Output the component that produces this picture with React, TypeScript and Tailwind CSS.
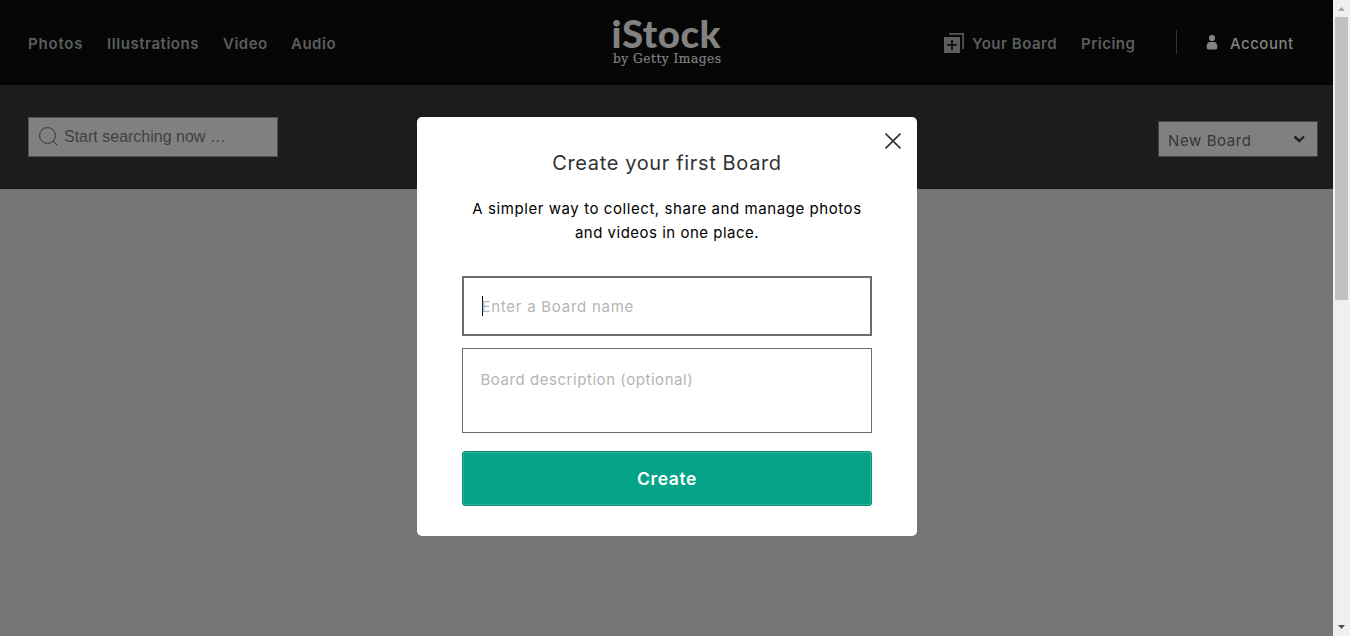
import React from 'react';

function Logo() {
  return (
    <svg className="relative left-1.5 h-[64px] w-[116px] shrink-0" viewBox="0 0 116 64" fill="#828282" aria-label="iStock by Getty Images">
      <text x="2.5" y="37.5" fontFamily="Lato, sans-serif" fontWeight="900" fontSize="37.5" textLength="109.5" lengthAdjust="spacingAndGlyphs">iStock</text>
      <text x="4" y="53" fontFamily="'DejaVu Serif', serif" fontWeight="400" fontSize="12.8" stroke="#828282" strokeWidth="0.2" textLength="108.5" lengthAdjust="spacingAndGlyphs">by Getty Images</text>
    </svg>
  );
}

function BoardIcon() {
  return (
    <svg className="relative -top-px h-5 w-5" viewBox="0 0 20 20">
      <path d="M5 .9H19.1V16" fill="none" stroke="#565958" strokeWidth="1.7" />
      <path d="M0 4H16V20H0z" fill="#5b5e5d" />
      <path d="M8 7V17M3 12H13" stroke="#060606" strokeWidth="1.6" />
    </svg>
  );
}

function Header() {
  return (
    <header className="flex h-[85px] items-center bg-[#060606] pb-px pl-7 pr-10 text-[15px] font-semibold leading-6 tracking-[0.5px] text-[#5b5e5d]">
      <nav className="flex flex-1 gap-6 pt-1">
        <a className="w-[55px] whitespace-nowrap tracking-[0.8px]">Photos</a>
        <a className="w-[92px] whitespace-nowrap tracking-[0.55px]">Illustrations</a>
        <a className="w-11 whitespace-nowrap">Video</a>
        <a className="whitespace-nowrap">Audio</a>
      </nav>
      <Logo />
      <div className="flex flex-1 items-center justify-end pt-1">
        <BoardIcon />
        <a className="ml-2 w-[85px] whitespace-nowrap">Your Board</a>
        <a className="ml-6 w-[55px] whitespace-nowrap">Pricing</a>
        <span className="-mt-1 ml-10 h-6 w-px bg-[#333]" />
        <svg className="-mt-1 ml-[29px] h-[15px] w-3" viewBox="0 0 12 15" fill="#828282">
          <circle cx="6" cy="3.1" r="3.1" />
          <path d="M3.5 7H8.5Q11.3 7.5 11.3 11.5V13.4L10 14.5H2L.7 13.4V11.5Q.7 7.5 3.5 7z" />
        </svg>
        <a className="ml-3 w-[63px] whitespace-nowrap font-medium text-[#828282]">Account</a>
      </div>
    </header>
  );
}

function Toolbar() {
  return (
    <div className="flex h-[104px] items-start justify-between bg-[#1b1d1c] pl-7 pr-[15px] pt-8">
      <div className="flex h-10 w-[250px] items-center border border-[#505352] bg-[#808080] pb-px pl-[9.5px] font-['Liberation_Sans',Arial,sans-serif] text-[16px] text-[#404040]">
        <svg className="mr-[6.5px] h-[19px] w-[19px]" viewBox="0 0 19 19" fill="none" stroke="#333">
          <circle cx="8.5" cy="8.5" r="7.9" />
          <path d="M14 14L18.5 18.5" />
        </svg>
        Start searching now …
      </div>
      <div className="mt-[4px] flex h-[36px] w-40 items-center justify-between border border-[#404342] bg-[#808080] pl-[9px] pr-3 text-[15px] tracking-[0.6px] text-[#343736]">
        <span className="pt-[4px]">New Board</span>
        <svg className="h-2 w-3" viewBox="0 0 12 8" fill="none" stroke="#222" strokeWidth="2.4">
          <path d="M1.5 1.5L6.3 6L11 1.5" />
        </svg>
      </div>
    </div>
  );
}

function BoardDialog() {
  return (
    <section role="dialog" className="absolute left-[417px] top-[117px] h-[419px] w-[500px] rounded-[5px] bg-white px-[45px] pt-[33px] text-center">
      <svg className="absolute right-4 top-4 h-4 w-4" viewBox="0 0 16 16" stroke="#333" strokeWidth="1.6">
        <path d="M.5 .5L15.5 15.5M15.5 .5L.5 15.5" />
      </svg>
      <h1 className="text-[20px] leading-[26px] tracking-[0.64px] text-[#323232]">Create your first Board</h1>
      <p className="mt-[21px] whitespace-nowrap text-[15px] leading-6 tracking-[0.57px] text-black">
        A simpler way to collect, share and manage photos
        <br />
        <span className="tracking-[0.5px]">and videos in one place.</span>
      </p>
      <div className="mt-[31px] flex h-[60px] w-[410px] items-center border-2 border-[#6a6f6d] pl-[18px] text-[15px] tracking-[0.74px] text-[#b5b5b5]">
        <span className="h-5 w-px bg-black" />
        <span className="-ml-[1.5px] pt-[2px]">Enter a Board name</span>
      </div>
      <div className="mt-3 h-[85px] w-[410px] border border-[#6a6f6d] pl-[17.5px] pt-[19px] text-left text-[15px] leading-6 tracking-[0.55px] text-[#b5b5b5]">
        Board description (optional)
      </div>
      <button className="mt-[18px] block h-[55px] w-[410px] rounded-[3px] border border-[#05937a] bg-[#04a388] pt-0.5 text-[17.5px] font-semibold tracking-[0.6px] text-white shadow-[inset_0_0_0_1px_#2bb09a]">
        Create
      </button>
    </section>
  );
}

function Scrollbar() {
  return (
    <aside className="flex h-[636px] w-[17px] flex-col items-center bg-[#f0f0f0]">
      <svg className="h-[17px] w-[17px]" viewBox="0 0 17 17"><path d="M5 11L8.5 7L12 11z" fill="#a3a3a3" /></svg>
      <div className="-ml-px h-[283px] w-[13px] bg-[#c1c1c1]" />
      <svg className="mt-auto h-[17px] w-[17px]" viewBox="0 0 17 17"><path d="M5 6L8.5 10L12 6z" fill="#505050" /></svg>
    </aside>
  );
}

export default function App() {
  return (
    <div className="relative flex h-[636px] w-[1350px] overflow-hidden bg-[#747776] font-['Inter',sans-serif]">
      <main className="w-[1333px]">
        <Header />
        <Toolbar />
      </main>
      <Scrollbar />
      <BoardDialog />
    </div>
  );
}
